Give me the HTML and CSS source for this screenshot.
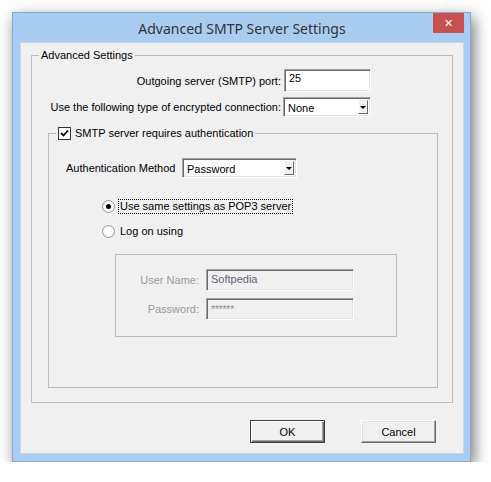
FILE: index.html
```html
<!DOCTYPE html>
<html lang="en">
<head>
    <meta charset="UTF-8">
    <meta name="viewport" content="width=device-width, initial-scale=1.0">
    <title>Advanced SMTP Server Settings</title>

    <!-- Custom CSS -->
    <link rel="stylesheet" href="styles.css">
</head>
<body>

    <!-- Dialog Window -->
    <div class="window">
        <div class="titlebar">
            <span class="title">Advanced SMTP Server Settings</span>
            <span class="close">&#x2715;</span>
        </div>

        <div class="client">
            <div class="group main-group">
                <span class="group-title">Advanced Settings</span>

                <div class="server-grid">
                    <span class="lbl">Outgoing server (SMTP) port:</span>
                    <div class="edit port">25</div>
                    <span class="lbl">Use the following type of encrypted connection:</span>
                    <div class="combo enc">
                        <span class="combo-text">None</span>
                        <span class="combo-btn"><span class="arrow"></span></span>
                    </div>
                </div>

                <div class="group auth-group">
                    <span class="group-title check-title">
                        <span class="checkbox">
                            <svg width="9" height="9" viewBox="0 0 9 9">
                                <path d="M1 4 L3.5 6.5 L8 1.5" fill="none" stroke="#000" stroke-width="1.8"/>
                            </svg>
                        </span>
                        SMTP server requires authentication
                    </span>

                    <div class="method-row">
                        <span class="method-lbl">Authentication Method</span>
                        <div class="combo method">
                            <span class="combo-text">Password</span>
                            <span class="combo-btn"><span class="arrow"></span></span>
                        </div>
                    </div>

                    <div class="radios">
                        <div class="radio-row">
                            <span class="radio checked"></span>
                            <span class="radio-text focused">Use same settings as POP3 server</span>
                        </div>
                        <div class="radio-row">
                            <span class="radio"></span>
                            <span class="radio-text">Log on using</span>
                        </div>
                    </div>

                    <div class="group creds">
                        <span class="lbl disabled">User Name:</span>
                        <div class="edit off">Softpedia</div>
                        <span class="lbl disabled">Password:</span>
                        <div class="edit off stars">******</div>
                    </div>
                </div>
            </div>

            <div class="buttons">
                <button class="btn btn-default">OK</button>
                <button class="btn">Cancel</button>
            </div>
        </div>
    </div>

</body>
</html>
```

FILE: styles.css
```css
body, html {
    margin: 0;
    padding: 0;
    background: #fff;
    font-family: 'Liberation Sans', Arial, sans-serif;
    font-size: 11px;
    color: #000;
}

.window {
    width: 459px;
    height: 450px;
    margin: 12px 0 0 12px;
    box-sizing: border-box;
    padding: 0 6px 7px 7px;
    background: #a9cdf0;
    border: 1px solid #86a9cd;
    box-shadow: 3px 5px 14px rgba(0, 0, 0, 0.55);
    display: flex;
    flex-direction: column;
}

.titlebar {
    position: relative;
    height: 29px;
    display: flex;
    align-items: center;
    justify-content: center;
}

.title {
    font-family: 'Noto Sans', sans-serif;
    font-size: 14px;
    color: #333;
    margin-top: 1px;
}

.close {
    position: absolute; /* caption button over the title bar */
    top: 0;
    right: 0;
    width: 31px;
    height: 20px;
    background: #c75050;
    color: #fff;
    font-family: 'DejaVu Sans', sans-serif;
    font-size: 11px;
    font-weight: bold;
    display: flex;
    align-items: center;
    justify-content: center;
}

.client {
    flex: 1;
    box-sizing: border-box;
    background: #f0f0f0;
    border: 1px solid #c5d9ee;
    display: flex;
    flex-direction: column;
}

/* Group boxes */
.group {
    position: relative;
    border: 1px solid #bcbcbc;
}

.group-title {
    position: absolute; /* caption sits on the top border */
    top: -7px;
    left: 7px;
    padding: 0 2px;
    background: #f0f0f0;
    line-height: 13px;
}

.main-group {
    margin: 12px 10px 0 10px;
    padding: 13px 14px 14px 13px;
}

.server-grid {
    display: grid;
    grid-template-columns: 236px 88px;
    column-gap: 2px;
    row-gap: 5px;
    align-items: center;
}

.lbl {
    text-align: right;
    white-space: nowrap;
}

.disabled {
    color: #9b9b9b;
}

/* Edits and combo boxes */
.edit, .combo {
    box-sizing: border-box;
    background: #fff;
    border: 1px solid;
    border-color: #a0a0a0 #fff #fff #a0a0a0;
    box-shadow: inset 1px 1px #696969, inset -1px -1px #e3e3e3;
}

.edit {
    height: 22px;
    padding: 3px 0 0 4px;
}

.port {
    height: 23px;
    margin-left: 1px;
    padding-top: 2px;
}

.combo {
    height: 20px;
    display: flex;
    align-items: stretch;
    padding: 2px;
}

.combo-text {
    flex: 1;
    padding: 2px 0 0 2px;
}

.combo-btn {
    width: 10px;
    box-sizing: border-box;
    background: #f0f0f0;
    border: 1px solid;
    border-color: #f0f0f0 #696969 #696969 #fff;
    display: flex;
    align-items: center;
    justify-content: center;
}

.arrow {
    width: 0;
    height: 0;
    border-left: 3px solid transparent;
    border-right: 3px solid transparent;
    border-top: 3px solid #000;
    margin-top: 1px;
}

.auth-group {
    margin: 16px 0 0 3px;
    padding: 24px 0 50px 17px;
}

.check-title {
    left: 7px;
    display: flex;
    align-items: center;
    gap: 4px;
}

.checkbox {
    width: 13px;
    height: 13px;
    box-sizing: border-box;
    border: 1px solid #333;
    background: #fff;
    display: flex;
    align-items: center;
    justify-content: center;
}

.method-row {
    display: flex;
    align-items: center;
}

.method-lbl {
    width: 116px;
}

.method {
    width: 115px;
}

.radios {
    margin: 21px 0 0 36px;
    display: flex;
    flex-direction: column;
    gap: 10px;
}

.radio-row {
    display: flex;
    align-items: center;
    height: 15px;
    gap: 3px;
}

.radio {
    width: 13px;
    height: 13px;
    box-sizing: border-box;
    border-radius: 50%;
    border: 1px solid #9a9a9a;
    background: radial-gradient(circle, #fff 40%, #e6e6e6 100%);
    display: flex;
    align-items: center;
    justify-content: center;
}

.radio.checked::after {
    content: "";
    width: 5px;
    height: 5px;
    border-radius: 50%;
    background: #000;
}

.radio-text {
    padding: 0 1px;
    line-height: 13px;
    border: 1px solid transparent;
}

.focused {
    border: 1px dotted #000;
}

.creds {
    width: 282px;
    height: 83px;
    box-sizing: border-box;
    margin: 15px 0 0 49px;
    padding-top: 14px;
    display: grid;
    grid-template-columns: 83px 148px;
    grid-auto-rows: 22px;
    column-gap: 7px;
    row-gap: 7px;
    align-items: center;
}

.off {
    background: #f0f0f0;
    color: #5e6779;
}

.stars {
    color: #8f8f8f;
    font-size: 11px;
    padding-top: 4px;
    letter-spacing: -0.5px;
}

/* Dialog buttons */
.buttons {
    display: flex;
    justify-content: flex-end;
    gap: 36px;
    margin-top: 17px;
    padding-right: 27px;
}

.btn {
    width: 75px;
    height: 23px;
    padding: 0;
    font-family: 'Liberation Sans', Arial, sans-serif;
    font-size: 11px;
    color: #000;
    background: #f0f0f0;
    border: 1px solid;
    border-color: #fff #696969 #696969 #fff;
    box-shadow: inset -1px -1px #a0a0a0, inset 1px 1px #e3e3e3;
}

.btn-default {
    border-color: #3c3c3c;
    box-shadow: inset 1px 1px #fff, inset -1px -1px #696969, inset -2px -2px #a0a0a0;
}
```
